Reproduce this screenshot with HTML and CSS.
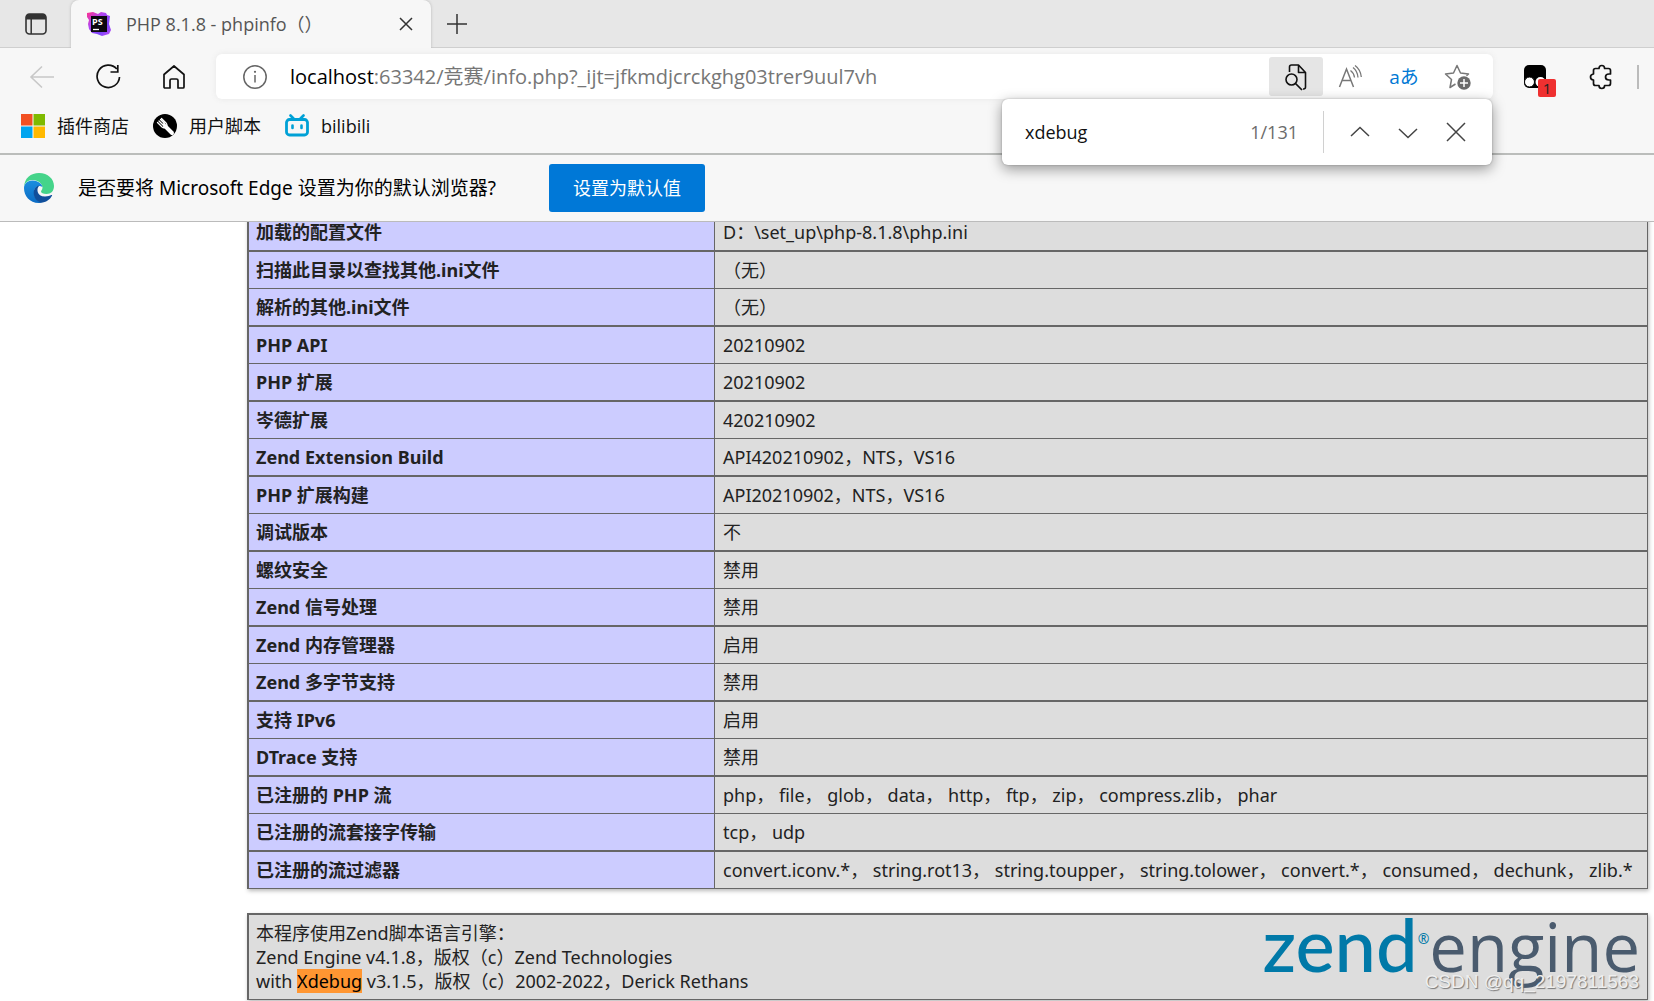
FILE: index.html
```html
<!DOCTYPE html>
<html lang="zh-CN">
<head>
<meta charset="utf-8">
<title>PHP 8.1.8 - phpinfo（）</title>
<link rel="stylesheet" href="styles.css">
</head>
<body>
<header class="browser">
  <div class="tabstrip">
    <button class="tab-actions" aria-label="标签页操作"><svg width="22" height="22" viewBox="0 0 22 22"><rect x="1" y="1" width="20" height="20" rx="3.5" fill="none" stroke="#333" stroke-width="1.6"/><path d="M1 6V4.500Q1 1 4.500 1H17.500Q21 1 21 4.500V6.500H1Z" fill="#333"/><path d="M6.200 6V21" stroke="#333" stroke-width="1.500"/></svg></button>
    <div class="tab">
      <svg class="tab-icon" width="26" height="26" viewBox="0 0 26 26"><defs><linearGradient id="ps" x1="0" y1="0" x2="1" y2="1"><stop offset="0" stop-color="#ff318c"/><stop offset=".35" stop-color="#b345f1"/><stop offset=".7" stop-color="#7b46fb"/><stop offset="1" stop-color="#c64af5"/></linearGradient></defs><path d="M1 2L7 1L12 3L15 1L20 2L21 4L24 5L23 13L25 19L23 23L16 25L11 23L6 22L3 18L2 13L3 9L1 6Z" fill="url(#ps)"/><rect x="5" y="5" width="16" height="16" fill="#0b0710"/><path d="M7 18.500h6" stroke="#fff" stroke-width="1.300"/><text x="6" y="14" class="ps-text">PS</text></svg>
      <span class="tab-title">PHP 8.1.8 - phpinfo（）</span>
      <button class="tab-close" aria-label="关闭标签页"><svg width="14" height="14" viewBox="0 0 14 14"><path d="M1 1L13 13M13 1L1 13" stroke="#333" stroke-width="1.500"/></svg></button>
    </div>
    <button class="new-tab" aria-label="新建标签页"><svg width="22" height="22" viewBox="0 0 22 22"><path d="M11 1V21M1 11H21" stroke="#333" stroke-width="1.500"/></svg></button>
  </div>
  <div class="toolbar">
    <nav class="nav">
      <button aria-label="后退"><svg width="26" height="24" viewBox="0 0 26 24"><path d="M13 1.500L2 12L13 22.500M2 12H25" fill="none" stroke="#c8c8c8" stroke-width="1.600"/></svg></button>
      <button aria-label="刷新"><svg width="26" height="26" viewBox="0 0 26 26"><path d="M21.800 5A11.200 11.200 0 1 0 24.500 13" fill="none" stroke="#111" stroke-width="1.700"/><path d="M22.800 1V8H15.500" fill="none" stroke="#111" stroke-width="1.700"/></svg></button>
      <button aria-label="主页"><svg width="24" height="26" viewBox="0 0 24 26"><path d="M2 10.500L12 2L22 10.500V23Q22 24 21 24H16V16.500Q16 15 14.500 15H9.500Q8 15 8 16.500V24H3Q2 24 2 23Z" fill="none" stroke="#111" stroke-width="1.700" stroke-linejoin="round"/></svg></button>
    </nav>
    <div class="address">
      <button class="site-info" aria-label="查看站点信息"><svg width="26" height="26" viewBox="0 0 26 26"><circle cx="13" cy="13" r="11.200" fill="none" stroke="#666" stroke-width="1.500"/><path d="M13 11V18.500" stroke="#666" stroke-width="1.500"/><circle cx="13" cy="7.800" r="1.100" fill="#666"/></svg></button>
      <div class="url" role="textbox" contenteditable="true" spellcheck="false" aria-label="地址栏"><span class="host">localhost</span>:63342/竞赛/info.php?_ijt=jfkmdjcrckghg03trer9uul7vh</div>
      <div class="address-actions">
        <button class="active" aria-label="在页面上查找"><svg width="24" height="28" viewBox="0 0 24 28"><path d="M5.500 9V4Q5.500 2 7.500 2H14.500L21.500 9.500V24Q21.500 26 19.500 26H19M14.500 2V9.500H21.500" fill="none" stroke="#111" stroke-width="1.600" stroke-linejoin="round"/><circle cx="7.500" cy="16.500" r="5.500" fill="none" stroke="#111" stroke-width="1.600"/><path d="M11.500 20.500L18 27" stroke="#111" stroke-width="1.700"/></svg></button>
        <button aria-label="大声朗读"><svg width="24" height="24" viewBox="0 0 24 24"><path d="M1.500 22L8.500 4L15.500 22M4 15.500H13" fill="none" stroke="#777" stroke-width="1.500"/><path d="M12.500 5.500Q16 8 16.500 12.500M15 2.500Q19.500 6 20 12.500M17 0.500Q22.500 4.500 23.300 12" fill="none" stroke="#777" stroke-width="1.300"/></svg></button>
        <button class="translate" aria-label="翻译">aあ</button>
        <button aria-label="收藏"><svg width="28" height="28" viewBox="0 0 28 28"><path d="M11.500 21L6 24.500L7.500 16.500L1.500 11L9.500 10L13 2.500L16.500 10L24.500 11L22.500 12.800" fill="none" stroke="#777" stroke-width="1.500" stroke-linejoin="round"/><circle cx="20" cy="20" r="6.700" fill="#6b6b6b"/><path d="M20 16V24M16 20H24" stroke="#fff" stroke-width="1.500"/></svg></button>
      </div>
    </div>
    <div class="extensions">
      <button class="tamper" aria-label="扩展"><svg width="24" height="24" viewBox="0 0 24 24"><rect x="1" y="0" width="22" height="23" rx="5" fill="#000"/><circle cx="6.500" cy="17" r="5" fill="#fff" stroke="#000"/><circle cx="17.500" cy="17" r="5" fill="#fff"/></svg><span class="badge">1</span></button>
      <button class="puzzle" aria-label="扩展管理"><svg width="24" height="26" viewBox="0 0 24 26"><path d="M6.500 4.500H10Q10 1.500 12.800 1.500Q15.600 1.500 15.600 4.500H19.500Q21.500 4.500 21.500 6.500V10H20Q16.500 10 16.500 13Q16.500 16 20 16H21.500V19.500Q21.500 21.500 19.500 21.500H15.600Q15.600 24.500 12.800 24.500Q10 24.500 10 21.500H6.500Q4.500 21.500 4.500 19.500V16Q1.500 15.600 1.500 13Q1.500 10.400 4.500 10V6.500Q4.500 4.500 6.500 4.500Z" fill="none" stroke="#111" stroke-width="1.700" stroke-linejoin="round"/></svg></button>
      <span class="divider"></span>
    </div>
    <form class="find">
      <input type="text" value="xdebug" aria-label="在页面上查找" spellcheck="false">
      <span class="count">1/131</span>
      <div class="find-buttons">
        <button type="button" aria-label="上一个"><svg width="20" height="20" viewBox="0 0 20 20"><path d="M1 14L10 5.500L19 14" fill="none" stroke="#444" stroke-width="1.500"/></svg></button>
        <button type="button" aria-label="下一个"><svg width="20" height="20" viewBox="0 0 20 20"><path d="M1 7L10 15.500L19 7" fill="none" stroke="#444" stroke-width="1.500"/></svg></button>
        <button type="button" aria-label="关闭"><svg width="20" height="20" viewBox="0 0 20 20"><path d="M1 1L19 19M19 1L1 19" stroke="#444" stroke-width="1.500"/></svg></button>
      </div>
    </form>
  </div>
  <nav class="bookmarks">
    <a href="#store"><svg width="24" height="24" viewBox="0 0 24 24"><path d="M0 0H11.500V11.500H0Z" fill="#f25022"/><path d="M12.500 0H24V11.500H12.500Z" fill="#7fba00"/><path d="M0 12.500H11.500V24H0Z" fill="#00a4ef"/><path d="M12.500 12.500H24V24H12.500Z" fill="#ffb900"/></svg>插件商店</a>
    <a href="#scripts"><svg width="24" height="24" viewBox="0 0 24 24"><circle cx="12" cy="12" r="12" fill="#000"/><path d="M12 12L19 19" stroke="#fff" stroke-width="4" stroke-linecap="round"/><path d="M4.500 8.500L9 13Q11 14.500 13 13T13 9L8.500 4.500M6 7L10 11M7.500 5.500L11.500 9.500" fill="none" stroke="#fff" stroke-width="1.300" stroke-linecap="round"/><path d="M9 10L11 9L13 11L11.500 13.500Z" fill="#fff"/></svg>用户脚本</a>
    <a href="#bilibili"><svg width="24" height="24" viewBox="0 0 24 24"><rect x="1.500" y="5.500" width="21" height="15.500" rx="3" fill="none" stroke="#00a1d6" stroke-width="2.800"/><path d="M5.500 1.500L8.500 4.500M18.500 1.500L15.500 4.500M7.500 11.500V14M16.500 11.500V14" stroke="#00a1d6" stroke-width="2.600" stroke-linecap="round"/></svg>bilibili</a>
  </nav>
</header>
<section class="infobar">
  <svg width="30" height="30" viewBox="0 0 30 30"><defs><linearGradient id="eb" x1="0" y1="0" x2="0" y2="1"><stop offset="0" stop-color="#1b8fe0"/><stop offset="1" stop-color="#0c6cc4"/></linearGradient></defs><path d="M0 15C0 5 7 0 15 0C24 0 30 6 30 13C30 18 27 21 22.500 21C19 21 17 20 17 18.500C17 17.500 18.500 17 18.500 14.500C18.500 10 13 7 8.500 7C4 7 0 10.500 0 15Z" fill="#45d48a"/><path d="M0 15C0 10.500 4 7.500 8.500 7.500C13.500 7.500 18 10.500 18.500 14C14 11 10 15 10 19C10 24 13 28 18 29.700C7 31.500 0 24 0 15Z" fill="url(#eb)"/><path d="M15.500 12.500C12 15 12.500 23.500 21 23.500C24 23.500 26 22.500 27.300 22C28 21.800 28.300 22.300 28 22.800C26 26.500 22 29.700 17 29.700C11 27.500 9.500 23 9.700 19C10 15.500 12.500 12.500 15.500 12.500Z" fill="#114f9b"/></svg>
  <p>是否要将 Microsoft Edge 设置为你的默认浏览器?</p>
  <button>设置为默认值</button>
</section>
<main class="page">
  <table class="info">
    <tr><th scope="row">加载的配置文件</th><td>D：\set_up\php-8.1.8\php.ini</td></tr>
    <tr><th scope="row">扫描此目录以查找其他.ini文件</th><td>（无）</td></tr>
    <tr><th scope="row">解析的其他.ini文件</th><td>（无）</td></tr>
    <tr><th scope="row">PHP API</th><td>20210902</td></tr>
    <tr><th scope="row">PHP 扩展</th><td>20210902</td></tr>
    <tr><th scope="row">岑德扩展</th><td>420210902</td></tr>
    <tr><th scope="row">Zend Extension Build</th><td>API420210902，NTS，VS16</td></tr>
    <tr><th scope="row">PHP 扩展构建</th><td>API20210902，NTS，VS16</td></tr>
    <tr><th scope="row">调试版本</th><td>不</td></tr>
    <tr><th scope="row">螺纹安全</th><td>禁用</td></tr>
    <tr><th scope="row">Zend 信号处理</th><td>禁用</td></tr>
    <tr><th scope="row">Zend 内存管理器</th><td>启用</td></tr>
    <tr><th scope="row">Zend 多字节支持</th><td>禁用</td></tr>
    <tr><th scope="row">支持 IPv6</th><td>启用</td></tr>
    <tr><th scope="row">DTrace 支持</th><td>禁用</td></tr>
    <tr><th scope="row">已注册的 PHP 流</th><td>php， file， glob， data， http， ftp， zip， compress.zlib， phar</td></tr>
    <tr><th scope="row">已注册的流套接字传输</th><td>tcp， udp</td></tr>
    <tr><th scope="row">已注册的流过滤器</th><td>convert.iconv.*， string.rot13， string.toupper， string.tolower， convert.*， consumed， dechunk， zlib.*</td></tr>
  </table>
  <section class="engine">
    <p>本程序使用Zend脚本语言引擎：<br>Zend Engine v4.1.8，版权（c）Zend Technologies<br>with <mark>Xdebug</mark> v3.1.5，版权（c）2002-2022，Derick Rethans</p>
    <a class="logo" href="#zend"><span class="zend">zend</span><span class="reg">®</span><span class="eng">engine</span></a>
    <span class="watermark">CSDN @qq_2197811563</span>
  </section>
</main>
</body>
</html>
```
FILE: styles.css
```css
* { box-sizing: border-box; }
body {
  margin: 0;
  height: 100vh;
  display: flex;
  flex-direction: column;
  overflow: hidden;
  background: #fff;
  color: #222;
  font: 18px/24px "Noto Sans", "Noto Sans CJK SC", sans-serif;
  text-spacing-trim: space-all;
}
svg { display: block; flex: none; }
p { margin: 0; }
button {
  display: flex;
  align-items: center;
  justify-content: center;
  padding: 0;
  border: 0;
  background: none;
  color: inherit;
  font: inherit;
}

.browser { flex: none; background: #f7f7f7; border-bottom: 2px solid #bbbdbb; font-family: "Open Sans", "Noto Sans CJK SC", sans-serif; }
.tabstrip {
  display: flex;
  height: 48px;
  background: #e7e7e7;
  box-shadow: inset 0 -1px #cfcfcf;
}
.tab-actions { width: 71px; }
.tab {
  display: flex;
  align-items: center;
  width: 360px;
  padding: 0 18px 0 15px;
  border-radius: 8px 8px 0 0;
  background: #f7f7f7;
  box-shadow: 0 0 3px #b5b5b5;
  clip-path: inset(0 -3px 0 -3px);
}
.tab-title { flex: 1; margin-left: 14px; color: #555; white-space: nowrap; }
.ps-text { font: bold 9px "Open Sans", sans-serif; fill: #fff; }
.new-tab { width: 52px; }

.toolbar {
  position: relative;
  display: flex;
  align-items: center;
  height: 57px;
}
.nav { display: flex; flex: none; width: 216px; padding-left: 9px; }
.nav button { width: 66px; height: 40px; }
.address {
  display: flex;
  flex: 1;
  align-items: center;
  min-width: 0;
  height: 45px;
  padding-left: 26px;
  border-radius: 6px;
  background: #fff;
  box-shadow: 0 0 6px #e8e8e8;
}
.url {
  flex: 1;
  margin-left: 22px;
  overflow: hidden;
  color: #767676;
  font-size: 20px;
  line-height: 32px;
  white-space: nowrap;
  outline: 0;
}
.host { color: #000; }
.address-actions { display: flex; padding-right: 8px; }
.address-actions button { width: 54px; height: 39px; border-radius: 3px; }
.address-actions .active { background: #e5e5e5; }
.address-actions .translate { color: #0078d4; font-size: 19px; }
.extensions { display: flex; flex: none; align-items: center; width: 161px; padding-left: 30px; }
.tamper { position: relative; width: 24px; height: 24px; }
.badge {
  position: absolute;
  left: 15px;
  top: 14px;
  width: 18px;
  height: 18px;
  border-radius: 2px;
  background: #ef3030;
  color: #222;
  font-size: 15px;
  line-height: 18px;
}
.puzzle { width: 24px; margin-left: 42px; }
.divider { width: 2px; height: 24px; margin-left: 24px; background: #bbb; }
.find {
  position: absolute;
  z-index: 2;
  top: 51px;
  right: 162px;
  display: flex;
  align-items: center;
  width: 490px;
  height: 66px;
  padding: 0 12px 0 23px;
  border-radius: 6px;
  background: #fff;
  box-shadow: 0 4px 14px rgb(0 0 0 / 40%), 0 0 2px rgb(0 0 0 / 25%);
}
.find input {
  flex: 1;
  min-width: 0;
  padding: 0;
  border: 0;
  outline: 0;
  background: none;
  color: #111;
  font: inherit;
}
.count { color: #6b6b6b; }
.find-buttons { display: flex; margin-left: 25px; padding-left: 12px; border-left: 1px solid #d0d0d0; }
.find-buttons button { width: 48px; height: 42px; }

.bookmarks { display: flex; gap: 24px; height: 48px; padding: 9px 21px 15px; }
.bookmarks a { display: flex; gap: 12px; color: #111; text-decoration: none; }

.infobar {
  display: flex;
  flex: none;
  align-items: center;
  height: 67px;
  padding-left: 24px;
  border-bottom: 1px solid #bbb;
  background: #f7f7f7;
  color: #000;
}
.infobar p { width: 471px; margin-left: 24px; font-size: 19px; white-space: nowrap; }
.infobar button { width: 156px; height: 48px; border-radius: 3px; background: #0078d7; color: #fff; }

.page { flex: 1; min-height: 0; overflow: hidden; padding: 0 6px 0 247px; }
.info {
  width: 100%;
  margin-top: -9px;
  border: solid #666;
  border-width: 0 1px 1px 2px;
  border-spacing: 0;
  table-layout: fixed;
  box-shadow: 1px 2px 4px #bbb;
}
.info th, .info td {
  height: 37px;
  padding: 0 7px;
  border-top: 1px solid #666;
  text-align: left;
  white-space: nowrap;
}
.info th { width: 466px; background: #ccf; border-right: 1px solid #666; }
.info td { padding-left: 8px; background: #ddd; }
.info tr:nth-child(even) > * { height: 38px; border-top-width: 2px; }

.engine {
  position: relative;
  display: flex;
  justify-content: space-between;
  margin-top: 24px;
  padding: 6px 7px;
  border: solid #666;
  border-width: 2px 1px 1px 2px;
  background: #ddd;
  box-shadow: 1px 2px 4px #bbb;
}
mark { background: #ff9632; color: #000; }
.logo { display: flex; align-items: baseline; height: 72px; line-height: 46px; text-decoration: none; }
.zend { color: #0079a8; font-family: Lato, sans-serif; font-size: 74px; font-weight: 500; }
.reg { color: #0079a8; font-size: 14px; align-self: flex-start; line-height: 36px; }
.eng { color: #4a5b6e; font-family: "Open Sans", sans-serif; font-size: 67px; }
.watermark {
  position: absolute;
  right: 8px;
  bottom: 5px;
  color: #eee;
  font: 19px/24px "Liberation Sans", sans-serif;
  text-shadow: 1px 1px 1px #777;
}
```
